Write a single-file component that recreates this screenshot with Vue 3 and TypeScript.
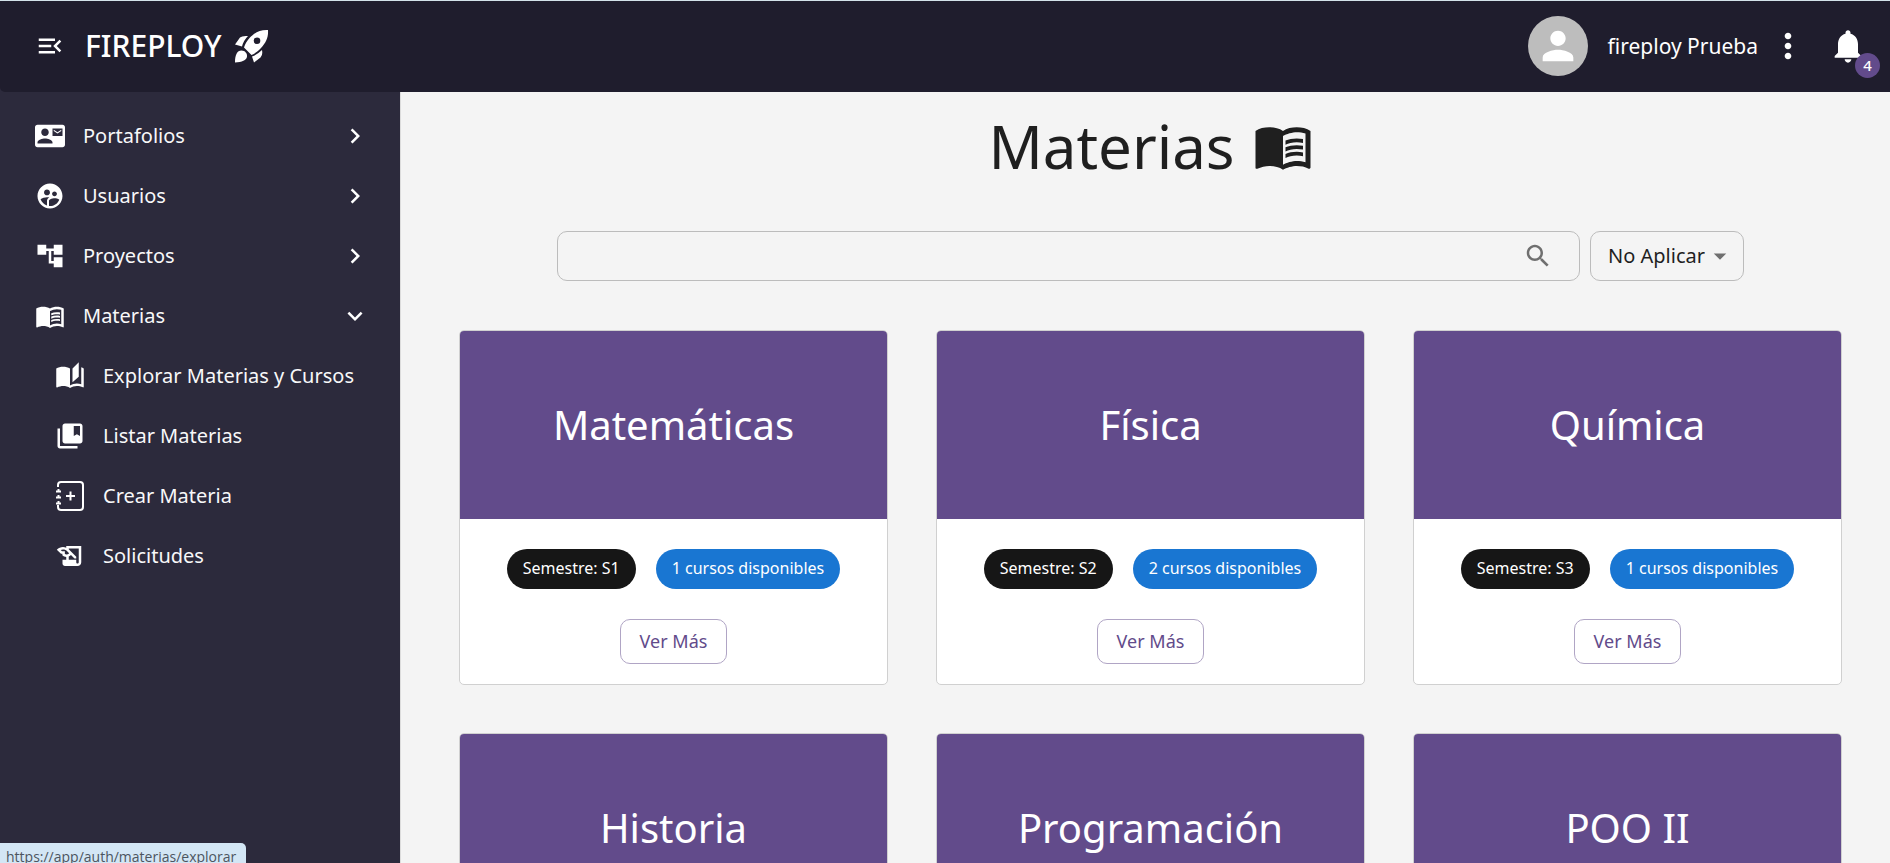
<script setup lang="ts">
import { ref } from 'vue'

interface NavItem {
  label: string
  icon: string
  open?: boolean
}

interface Subject {
  name: string
  semester: string
  courses: number
}

const icons: Record<string, string> = {
  menuOpen: 'M3 18h13v-2H3v2zm0-5h10v-2H3v2zm0-7v2h13V6H3zm18 9.59L17.42 12 21 8.41 19.59 7l-5 5 5 5L21 15.59z',
  contact:
    'M21 8V7l-3 2-3-2v1l3 2 3-2zm1-5H2C.9 3 0 3.9 0 5v14c0 1.1.9 2 2 2h20c1.1 0 1.99-.9 1.99-2L24 5c0-1.1-.9-2-2-2zM8 6c1.66 0 3 1.34 3 3s-1.34 3-3 3-3-1.34-3-3 1.34-3 3-3zm6 12H2v-1c0-2 4-3.1 6-3.1s6 1.1 6 3.1v1zm8-6h-8V6h8v6z',
  users:
    'M11.99 2c-5.52 0-10 4.48-10 10s4.48 10 10 10 10-4.48 10-10-4.48-10-10-10zm3.61 6.34c1.07 0 1.93.86 1.93 1.93 0 1.07-.86 1.93-1.93 1.93-1.07 0-1.93-.86-1.93-1.93-.01-1.07.86-1.93 1.93-1.93zm-6-1.58c1.3 0 2.36 1.06 2.36 2.36 0 1.3-1.06 2.36-2.36 2.36s-2.36-1.06-2.36-2.36c0-1.31 1.05-2.36 2.36-2.36zm0 9.13v3.75c-2.4-.75-4.3-2.6-5.14-4.96 1.05-1.12 3.67-1.69 5.14-1.69.53 0 1.2.08 1.9.22-1.64.87-1.9 2.02-1.9 2.68zM11.99 20c-.27 0-.53-.01-.79-.04v-4.07c0-1.42 2.94-2.13 4.4-2.13 1.07 0 2.92.39 3.84 1.15-1.17 2.97-4.06 5.09-7.45 5.09z',
  tree: 'M22 11V3h-7v3H9V3H2v8h7V8h2v10h4v3h7v-8h-7v3h-2V8h2v3z',
  book: 'M17.5 4.5c-1.95 0-4.05.4-5.5 1.5-1.45-1.1-3.55-1.5-5.5-1.5S2.45 4.9 1 6v14.65c0 .65.73.45.75.45C3.1 20.45 5.05 20 6.5 20c1.95 0 4.05.4 5.5 1.5 1.35-.85 3.8-1.5 5.5-1.5 1.65 0 3.35.3 4.75 1.05.41.21.75-.19.75-.45V6c-1.49-1.12-3.63-1.5-5.5-1.5zm3.5 14c-1.1-.35-2.3-.5-3.5-.5-1.7 0-4.15.65-5.5 1.5V8c1.35-.85 3.8-1.5 5.5-1.5 1.2 0 2.4.15 3.5.5v11.5zM17.5 10.5c.88 0 1.73.09 2.5.26V9.24c-.79-.15-1.64-.24-2.5-.24-1.7 0-3.24.29-4.5.83v1.66c1.13-.64 2.7-.99 4.5-.99zM13 12.49v1.66c1.13-.64 2.7-.99 4.5-.99.88 0 1.73.09 2.5.26V11.9c-.79-.15-1.64-.24-2.5-.24-1.7 0-3.24.3-4.5.83zM17.5 14.33c-1.7 0-3.24.29-4.5.83v1.66c1.13-.64 2.7-.99 4.5-.99.88 0 1.73.09 2.5.26v-1.52c-.79-.16-1.64-.24-2.5-.24z',
  stories:
    'M19 1l-5 5v11l5-4.5V1zM1 6v14.65c0 .25.25.5.5.5.1 0 .15-.05.25-.05C3.1 20.45 5.05 20 6.5 20c1.95 0 4.05.4 5.5 1.5V6c-1.45-1.1-3.55-1.5-5.5-1.5S2.45 4.9 1 6zm22 13.5V6c-.6-.45-1.25-.75-2-1v13.5c-1.1-.35-2.3-.5-3.5-.5-1.7 0-4.15.65-5.5 1.5v2c1.35-.85 3.8-1.5 5.5-1.5 1.65 0 3.35.3 4.75 1.05.1.05.15.05.25.05.25 0 .5-.25.5-.5v-1.1z',
  bookmarks:
    'M4 6H2v14c0 1.1.9 2 2 2h14v-2H4V6zM20 2H8c-1.1 0-2 .9-2 2v12c0 1.1.9 2 2 2h12c1.1 0 2-.9 2-2V4c0-1.1-.9-2-2-2zm0 10l-2.5-1.5L15 12V4h5v8z',
  history:
    'M9 4v1.38c-.83-.33-1.72-.5-2.61-.5-1.79 0-3.58.68-4.95 2.05l3.33 3.33h1.11v1.11c.86.86 1.98 1.31 3.11 1.36V15H6v3c0 1.1.9 2 2 2h10c1.66 0 3-1.34 3-3V4H9zm-1.11 6.41V8.26H5.61L4.57 7.22a5.07 5.07 0 0 1 1.82-.34c1.34 0 2.59.52 3.54 1.46l1.41 1.41-.2.2c-.51.51-1.19.8-1.92.8-.47 0-.93-.12-1.33-.34zM19 17c0 .55-.45 1-1 1s-1-.45-1-1v-2h-6v-2.59c.57-.23 1.1-.57 1.56-1.03l.2-.2L15.59 14H17v-1.41l-6-5.97V6h8v11z',
  person: 'M12 12c2.21 0 4-1.79 4-4s-1.79-4-4-4-4 1.79-4 4 1.79 4 4 4zm0 2c-2.67 0-8 1.34-8 4v2h16v-2c0-2.66-5.33-4-8-4z',
  more: 'M12 8c1.1 0 2-.9 2-2s-.9-2-2-2-2 .9-2 2 .9 2 2 2zm0 2c-1.1 0-2 .9-2 2s.9 2 2 2 2-.9 2-2-.9-2-2-2zm0 6c-1.1 0-2 .9-2 2s.9 2 2 2 2-.9 2-2-.9-2-2-2z',
  bell: 'M12 22c1.1 0 2-.9 2-2h-4c0 1.1.89 2 2 2zm6-6v-5c0-3.07-1.64-5.64-4.5-6.32V4c0-.83-.67-1.5-1.5-1.5s-1.5.67-1.5 1.5v.68C7.63 5.36 6 7.92 6 11v5l-2 2v1h16v-1l-2-2z',
  search:
    'M15.5 14h-.79l-.28-.27C15.41 12.59 16 11.11 16 9.5 16 5.91 13.09 3 9.5 3S3 5.91 3 9.5 5.91 16 9.5 16c1.61 0 3.09-.59 4.23-1.57l.27.28v.79l5 4.99L20.49 19l-4.99-5zm-6 0C7.01 14 5 11.99 5 9.5S7.01 5 9.5 5 14 7.01 14 9.5 11.99 14 9.5 14z',
  drop: 'M7 10l5 5 5-5z',
  right: 'M10 6 8.59 7.41 13.17 12l-4.58 4.59L10 18l6-6z',
  down: 'M16.59 8.59 12 13.17 7.41 8.59 6 10l6 6 6-6z',
}

const sections: NavItem[] = [
  { label: 'Portafolios', icon: 'contact' },
  { label: 'Usuarios', icon: 'users' },
  { label: 'Proyectos', icon: 'tree' },
  { label: 'Materias', icon: 'book', open: true },
]

const links: NavItem[] = [
  { label: 'Explorar Materias y Cursos', icon: 'stories' },
  { label: 'Listar Materias', icon: 'bookmarks' },
  { label: 'Crear Materia', icon: 'notebook' },
  { label: 'Solicitudes', icon: 'history' },
]

const subjects: Subject[] = [
  { name: 'Matemáticas', semester: 'S1', courses: 1 },
  { name: 'Física', semester: 'S2', courses: 2 },
  { name: 'Química', semester: 'S3', courses: 1 },
  { name: 'Historia', semester: 'S4', courses: 1 },
  { name: 'Programación', semester: 'S5', courses: 1 },
  { name: 'POO II', semester: 'S6', courses: 1 },
]

const query = ref('')
const filter = ref('No Aplicar')
</script>

<template>
  <div class="app">
    <header class="topbar">
      <button class="icon-btn" type="button" aria-label="Contraer menú">
        <svg class="i30" viewBox="0 0 24 24"><path :d="icons.menuOpen" /></svg>
      </button>
      <span class="brand">FIREPLOY</span>
      <svg class="rocket" viewBox="0 0 36 36" aria-hidden="true">
        <path
          fill-rule="evenodd"
          d="M34 2C26 1.500 20 5 15.500 10C13 13 11 16 10 19.500L17.500 27C21 25.500 24 23 27 20C32 15 34.500 9.500 34 2zM23 9.500a3.300 3.300 0 1 1 0 6.600 3.300 3.300 0 0 1 0-6.600z"
        />
        <path d="M1 16.500L6 9.500Q8 7.500 14 8Q9.500 12.500 8 18.500z" />
        <path d="M20 34.500L26.500 29.500Q29 27 28 22Q23.500 26.500 18 28.500z" />
        <path d="M1 34.500C1 27 3 22.500 7.500 22.500C11 22.500 13.500 25.500 13 28.500C12.500 32.500 8 34 1 34.500z" />
      </svg>
      <div class="account">
        <span class="avatar"><svg class="i46" viewBox="0 0 24 24"><path :d="icons.person" /></svg></span>
        <span class="user">fireploy Prueba</span>
        <button class="icon-btn more" type="button" aria-label="Más opciones">
          <svg class="i40" viewBox="0 0 24 24"><path :d="icons.more" /></svg>
        </button>
        <button class="icon-btn bell" type="button" aria-label="Notificaciones">
          <svg class="i40" viewBox="0 0 24 24"><path :d="icons.bell" /></svg>
          <span class="badge">4</span>
        </button>
      </div>
    </header>

    <div class="body">
      <nav class="sidebar">
        <button v-for="s in sections" :key="s.label" class="nav-row" type="button" :aria-expanded="!!s.open">
          <svg class="i30" viewBox="0 0 24 24"><path :d="icons[s.icon]" fill-rule="evenodd" /></svg>
          <span class="nav-label">{{ s.label }}</span>
          <svg class="i30" viewBox="0 0 24 24"><path :d="s.open ? icons.down : icons.right" /></svg>
        </button>
        <a v-for="l in links" :key="l.label" class="nav-row sub" href="#">
          <svg v-if="l.icon === 'notebook'" class="i30 outline" viewBox="0 0 30 30">
            <path d="M3 6V4Q3 1 6 1H25Q28 1 28 4V26Q28 29 25 29H6Q3 29 3 26V24" />
            <path d="M1 10.500H6M1 16.500H6M1 22.500H6M3.500 8V10M3.500 14V16M3.500 20V22M15.500 10.500V19.500M11 15H20" />
          </svg>
          <svg v-else class="i30" viewBox="0 0 24 24"><path :d="icons[l.icon]" fill-rule="evenodd" /></svg>
          <span class="nav-label">{{ l.label }}</span>
        </a>
      </nav>

      <main class="content">
        <h1 class="title">
          Materias
          <svg class="i60" viewBox="0 0 24 24" aria-hidden="true"><path :d="icons.book" /></svg>
        </h1>

        <form class="filters" @submit.prevent>
          <div class="search">
            <input v-model="query" type="text" aria-label="Buscar materias" />
            <button class="icon-btn" type="submit" aria-label="Buscar">
              <svg class="i30" viewBox="0 0 24 24"><path :d="icons.search" /></svg>
            </button>
          </div>
          <div class="select">
            <select v-model="filter" aria-label="Semestre">
              <option>No Aplicar</option>
            </select>
            <svg class="i30 caret" viewBox="0 0 24 24" aria-hidden="true"><path :d="icons.drop" /></svg>
          </div>
        </form>

        <section class="grid">
          <article v-for="s in subjects" :key="s.name" class="card">
            <h2 class="card-head">{{ s.name }}</h2>
            <div class="card-body">
              <div class="chips">
                <span class="chip dark">Semestre: {{ s.semester }}</span>
                <span class="chip blue">{{ s.courses }} cursos disponibles</span>
              </div>
              <button class="more-btn" type="button">Ver Más</button>
            </div>
          </article>
        </section>
      </main>
    </div>

    <div class="status">https://app/auth/materias/explorar</div>
  </div>
</template>

<style>
body {
  margin: 0;
  background: #f4f4f4;
}
</style>

<style scoped>
.app {
  height: 100vh;
  display: flex;
  flex-direction: column;
  overflow: hidden;
  box-sizing: border-box;
  border-top: 1px solid #d3e3ea;
  font-family: 'Noto Sans', 'Open Sans', sans-serif;
  color: #1f1f1f;
  background: #2c2a3c;
}
svg {
  display: block;
  flex: none;
  fill: currentColor;
}
.i30 { width: 30px; height: 30px; }
.i40 { width: 40px; height: 40px; }
.i46 { width: 46px; height: 46px; }
.i60 { width: 60px; height: 60px; }
button,
input,
select {
  font: inherit;
  color: inherit;
}
.icon-btn {
  border: 0;
  padding: 0;
  background: none;
  cursor: pointer;
}
.topbar {
  flex: none;
  height: 91px;
  display: flex;
  align-items: center;
  box-sizing: border-box;
  padding: 0 22px 2px 35px;
  color: #fff;
  background: #1f1d2d;
  border-radius: 0 0 0 5px;
}
.brand {
  margin-left: 20px;
  font-size: 30px;
  line-height: 40px;
  font-weight: 500;
}
.rocket {
  margin-left: 12px;
  width: 36px;
  height: 36px;
}
.account {
  margin-left: auto;
  display: flex;
  align-items: center;
}
.avatar {
  width: 60px;
  height: 60px;
  border-radius: 50%;
  display: grid;
  place-items: center;
  background: #bdbdbd;
}
.user {
  margin-left: 20px;
  font-size: 21px;
  line-height: 32px;
}
.more {
  margin-left: 10px;
}
.bell {
  margin-left: 20px;
  position: relative;
}
.badge {
  position: absolute;
  right: -12px;
  bottom: -12px;
  width: 25px;
  height: 25px;
  border-radius: 50%;
  background: #624b8b;
  font-size: 15px;
  line-height: 25px;
  font-weight: 500;
}
.body {
  flex: 1;
  min-height: 0;
  display: flex;
}
.sidebar {
  flex: none;
  width: 400px;
  box-sizing: border-box;
  padding-top: 14px;
  color: #fff;
  background: #2c2a3c;
}
.nav-row {
  width: 100%;
  height: 60px;
  box-sizing: border-box;
  display: flex;
  align-items: center;
  gap: 18px;
  padding: 0 30px 0 35px;
  border: 0;
  background: none;
  color: inherit;
  font-size: 20px;
  line-height: 28px;
  text-align: left;
  text-decoration: none;
  cursor: pointer;
}
.nav-row.sub {
  padding-left: 55px;
}
.nav-label {
  flex: 1;
  color: #f8f8f9;
  white-space: nowrap;
}
.outline {
  fill: none;
  stroke: currentColor;
  stroke-width: 2;
}
.content {
  flex: 1;
  min-width: 0;
  overflow: hidden;
  box-sizing: border-box;
  padding: 9px 48px 0 58px;
  border-left: 1px solid #dcdcdc;
  background: #f4f4f4;
}
.title {
  margin: 0;
  display: flex;
  justify-content: center;
  align-items: center;
  gap: 18px;
  font-size: 60px;
  line-height: 90px;
  font-weight: 400;
}
.filters {
  margin: 40px 98px 0;
  display: flex;
  gap: 10px;
}
.search,
.select {
  height: 50px;
  box-sizing: border-box;
  border: 1px solid #bcbcbc;
  border-radius: 10px;
  display: flex;
  align-items: center;
}
.search {
  flex: 1;
  padding: 0 26px 0 16px;
  color: #6f6f6f;
}
.search input {
  flex: 1;
  min-width: 0;
  border: 0;
  outline: 0;
  background: none;
  font-size: 20px;
}
.select {
  position: relative;
}
.select select {
  appearance: none;
  height: 100%;
  border: 0;
  outline: 0;
  padding: 0 38px 2px 17px;
  background: none;
  font-size: 20px;
}
.caret {
  position: absolute;
  right: 8px;
  color: #6f6f6f;
  pointer-events: none;
}
.grid {
  margin-top: 49px;
  display: grid;
  grid-template-columns: repeat(3, 1fr);
  gap: 48px;
}
.card {
  border: 1px solid #d0d0d0;
  border-radius: 5px;
  overflow: hidden;
  background: #fff;
}
.card-head {
  margin: 0;
  height: 188px;
  display: grid;
  place-items: center;
  font-size: 40px;
  line-height: 56px;
  font-weight: 400;
  color: #fff;
  background: #624b8b;
}
.card-body {
  display: flex;
  flex-direction: column;
  align-items: center;
  gap: 30px;
  padding: 30px 20px 20px;
}
.chips {
  display: flex;
  gap: 20px;
}
.chip {
  height: 40px;
  padding: 0 16px;
  border-radius: 20px;
  font-size: 16px;
  line-height: 38px;
  color: #fff;
  white-space: nowrap;
}
.dark {
  background: #161616;
}
.blue {
  background: #1976d2;
}
.more-btn {
  height: 45px;
  padding: 0 19px 2px;
  border: 1px solid #b0a5c5;
  border-radius: 10px;
  background: none;
  color: #624b8b;
  font-size: 18px;
  cursor: pointer;
}
.status {
  position: fixed;
  left: 0;
  bottom: 0;
  height: 20px;
  padding: 0 10px 0 6px;
  border-top-right-radius: 5px;
  background: #d3e6f5;
  color: #4c5560;
  font-family: 'Open Sans', sans-serif;
  font-size: 14px;
  line-height: 28px;
  overflow: hidden;
}
</style>
